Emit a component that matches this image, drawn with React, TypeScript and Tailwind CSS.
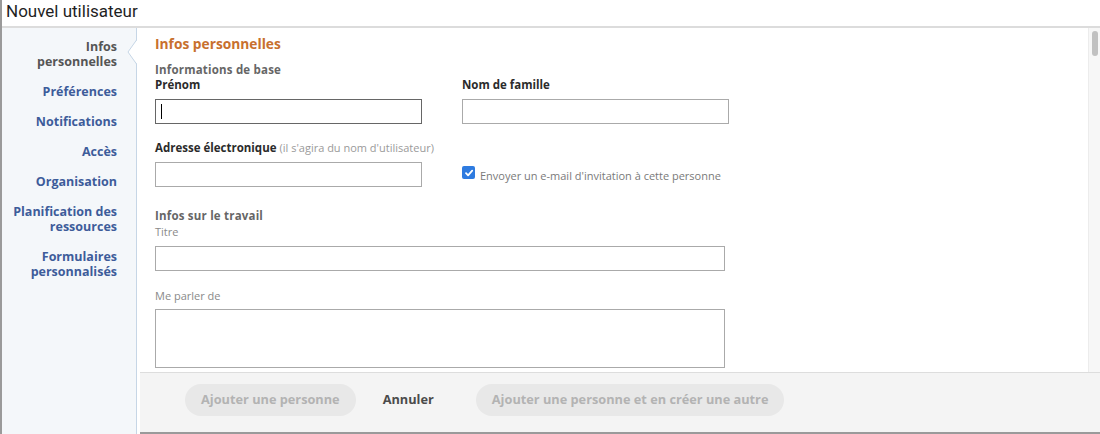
import React from "react";

const font = { fontFamily: "'Open Sans', Lato, Arial, sans-serif" };

function Label({ children }: { children: React.ReactNode }) {
  return <div className="text-[11.5px] leading-[14px] font-bold text-[#2b2b2b]">{children}</div>;
}

export default function App() {
  const navItems: { label: string[]; active?: boolean }[] = [
    { label: ["Infos", "personnelles"], active: true },
    { label: ["Préférences"] },
    { label: ["Notifications"] },
    { label: ["Accès"] },
    { label: ["Organisation"] },
    { label: ["Planification des", "ressources"] },
    { label: ["Formulaires", "personnalisés"] },
  ];
  return (
    <div className="w-[1100px] h-[434px] flex flex-col bg-white border-l-2 border-[#9a9a9a] overflow-hidden" style={font}>
      <div className="h-[28px] shrink-0 border-b-2 border-[#dcdcdc] flex items-center pl-[4px]">
        <span className="text-[17px] text-[#1f1f1f] leading-[20px] -mt-[4px]" style={{ fontFamily: "Roboto, 'Open Sans', sans-serif" }}>
          Nouvel utilisateur
        </span>
      </div>
      <div className="flex flex-1 min-h-0">
        <div className="relative w-[135px] shrink-0 bg-[#f4f7fa] border-r border-[#c6d6e6] pt-[11px] pr-[19px] flex flex-col items-end gap-[15px]">
          {navItems.map((item, i) => (
            <div
              key={i}
              className={`text-right text-[12.5px] leading-[15px] font-bold ${item.active ? "text-[#555555]" : "text-[#3d5c9a]"}`}
            >
              {item.label.map((l, j) => (
                <div key={j}>{l}</div>
              ))}
            </div>
          ))}
          <svg className="absolute right-[-1px] top-[12px]" width="10" height="26" viewBox="0 0 10 26">
            <polygon points="10,0 1,12 10,24" fill="#ffffff" />
            <polyline points="9.5,0 1,12 9.5,24" fill="none" stroke="#c6d6e6" strokeWidth="1" />
          </svg>
        </div>
        <div className="flex-1 flex flex-col min-w-0">
          <div className="flex-1 min-h-0 flex">
            <div className="flex-1 pl-[18px] pt-[7px]">
              <div className="text-[13.75px] leading-[18px] font-bold text-[#c8702e]">Infos personnelles</div>
              <div className="mt-[9px] text-[11.5px] leading-[16px] font-bold tracking-[0.2px] text-[#666666]">Informations de base</div>
              <div className="flex gap-[40px]">
                <div className="w-[267px]">
                  <Label>Prénom</Label>
                  <div className="mt-[7px] h-[25px] border border-[#666666] flex items-center pl-[5px]">
                    <div className="w-px h-[15px] bg-black" />
                  </div>
                  <div className="mt-[17px] text-[11.5px] leading-[14px] text-[#2b2b2b] whitespace-nowrap">
                    <span className="font-bold">Adresse électronique</span>{" "}
                    <span className="text-[#9a9a9a] text-[11px]">(il s'agira du nom d'utilisateur)</span>
                  </div>
                  <div className="mt-[7px] h-[25px] border border-[#aaaaaa]" />
                </div>
                <div className="w-[267px]">
                  <Label>Nom de famille</Label>
                  <div className="mt-[7px] h-[25px] border border-[#aaaaaa]" />
                  <div className="mt-[38px] flex items-center">
                    <div className="w-[13px] h-[13px] rounded-[2px] bg-[#2e7be0] flex items-center justify-center">
                      <svg width="10" height="10" viewBox="0 0 10 10">
                        <path d="M2 5.2 L4.1 7.3 L8.2 2.6" fill="none" stroke="#fff" strokeWidth="1.8" strokeLinecap="round" strokeLinejoin="round" />
                      </svg>
                    </div>
                    <span className="ml-[5px] mt-[7px] text-[11px] leading-[14px] text-[#7a7a7a]">
                      Envoyer un e-mail d'invitation à cette personne
                    </span>
                  </div>
                </div>
              </div>
              <div className="mt-[21px] text-[11.5px] leading-[16px] font-bold tracking-[0.2px] text-[#666666]">Infos sur le travail</div>
              <div className="text-[11px] leading-[16px] text-[#8a8a8a]">Titre</div>
              <div className="mt-[6px] w-[570px] h-[25px] border border-[#aaaaaa]" />
              <div className="mt-[17px] text-[11px] leading-[16px] text-[#8a8a8a]">Me parler de</div>
              <div className="mt-[5px] w-[570px] h-[59px] border border-[#aaaaaa]" />
            </div>
            <div className="w-[12px] shrink-0 bg-[#f7f7f7] border-l border-[#ececec] pt-[3px] flex justify-center">
              <div className="w-[6px] h-[25px] rounded-full bg-[#c1c1c1]" />
            </div>
          </div>
          <div className="h-[62px] shrink-0 ml-[3px] bg-[#f4f4f4] border-t border-[#dddddd] border-b-2 border-b-[#9a9a9a] flex items-start pt-[11px] pl-[45px]">
            <div className="h-[32px] px-[16px] rounded-full bg-[#e8e8e8] flex items-center text-[12.75px] font-bold text-[#b3b3b3]">
              Ajouter une personne
            </div>
            <div className="ml-[27px] h-[32px] flex items-center text-[12.75px] font-bold text-[#4b4b4b]">Annuler</div>
            <div className="ml-[42px] h-[32px] px-[16px] rounded-full bg-[#e8e8e8] flex items-center text-[12.75px] font-bold text-[#b3b3b3]">
              Ajouter une personne et en créer une autre
            </div>
          </div>
        </div>
      </div>
    </div>
  );
}
